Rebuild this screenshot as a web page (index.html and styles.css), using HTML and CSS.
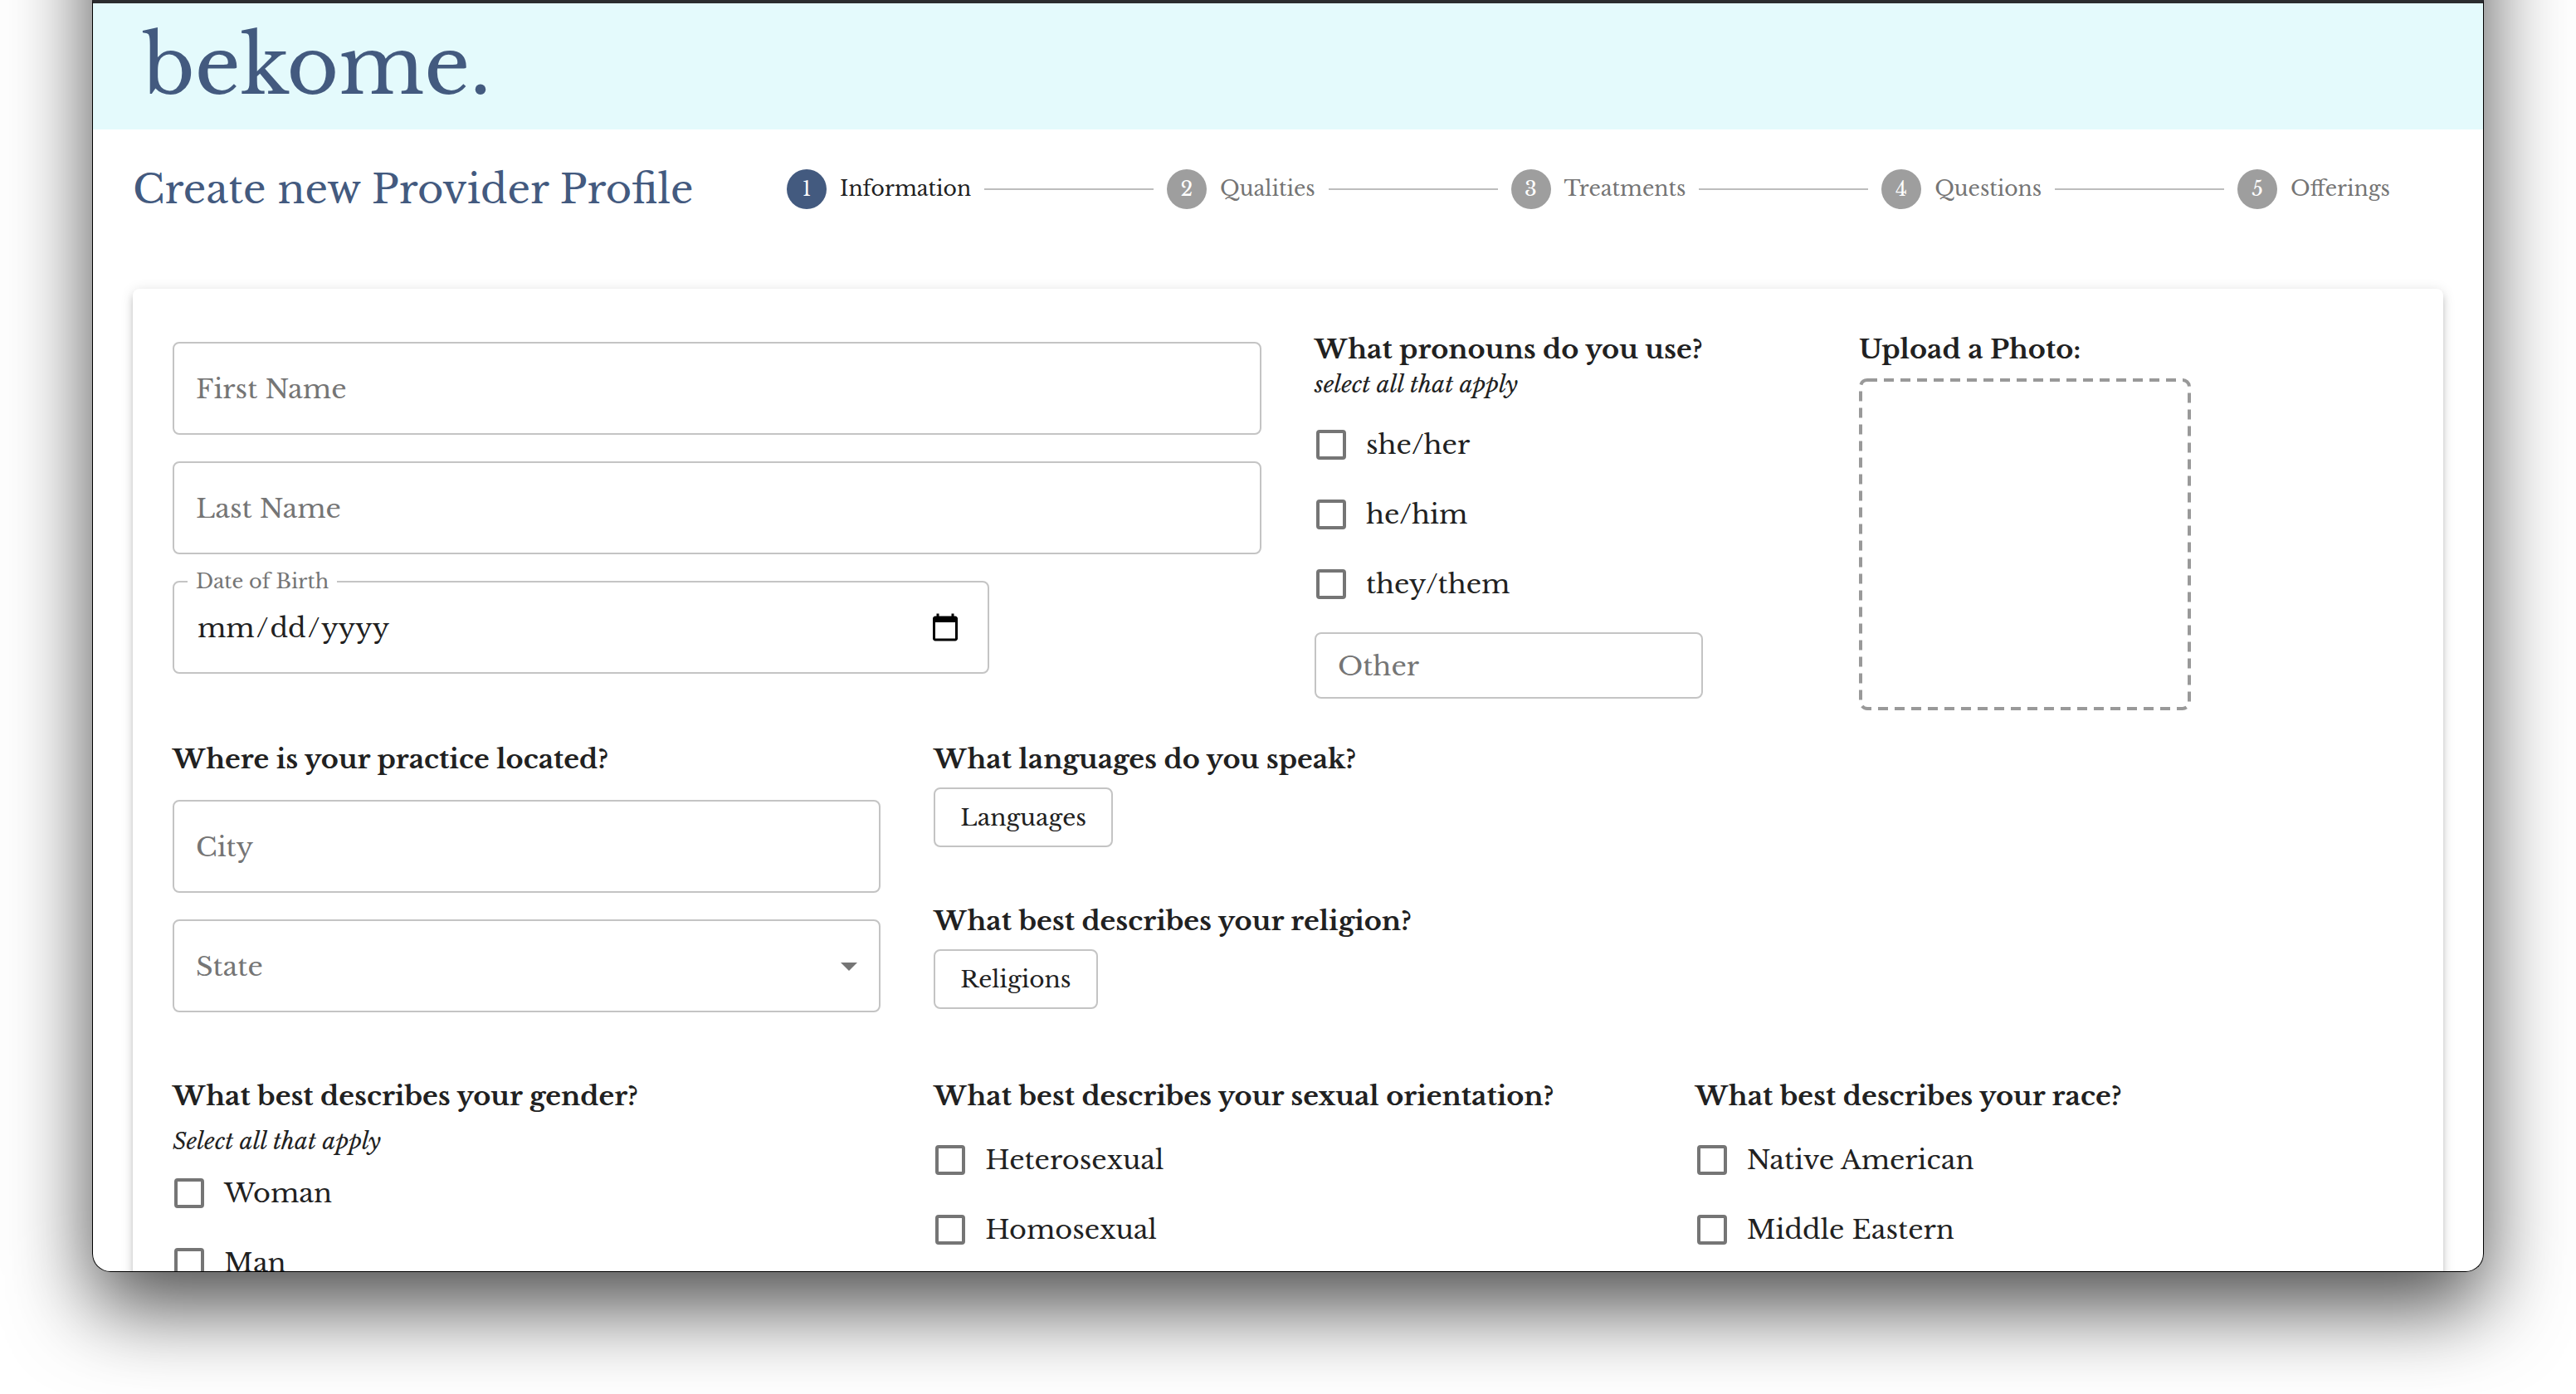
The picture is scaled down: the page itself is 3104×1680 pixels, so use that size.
FILE: index.html
```html
<!DOCTYPE html>
<html lang="en">
<head>
<meta charset="utf-8">
<title>bekome. – Create new Provider Profile</title>
<link rel="stylesheet" href="styles.css">
</head>
<body>
<div class="stage">
  <div class="window">
    <header class="brand"><span class="logo">bekome.</span></header>
    <main>
      <div class="intro">
        <h1 class="title">Create new Provider Profile</h1>
        <ol class="stepper">
          <li class="step step-active"><span class="dot">1</span>Information</li>
          <li class="line" role="presentation"></li>
          <li class="step"><span class="dot">2</span>Qualities</li>
          <li class="line" role="presentation"></li>
          <li class="step"><span class="dot">3</span>Treatments</li>
          <li class="line" role="presentation"></li>
          <li class="step"><span class="dot">4</span>Questions</li>
          <li class="line" role="presentation"></li>
          <li class="step"><span class="dot">5</span>Offerings</li>
        </ol>
      </div>

      <form class="card">
        <div class="row row-person">
          <div class="fields fields-name">
            <input class="field" type="text" placeholder="First Name" aria-label="First Name">
            <input class="field" type="text" placeholder="Last Name" aria-label="Last Name">
            <div class="date">
              <label class="date-label" for="dob">Date of Birth</label>
              <input class="field" type="date" id="dob">
            </div>
          </div>
          <section>
            <h2 class="question">What pronouns do you use?</h2>
            <p class="hint">select all that apply</p>
            <label class="option"><input class="check" type="checkbox">she/her</label>
            <label class="option"><input class="check" type="checkbox">he/him</label>
            <label class="option"><input class="check" type="checkbox">they/them</label>
            <input class="field field-small" type="text" placeholder="Other" aria-label="Other">
          </section>
          <section>
            <h2 class="question">Upload a Photo:</h2>
            <label class="photo" aria-label="Upload a Photo">
              <input class="file" type="file" accept="image/*">
              <svg class="photo-frame" viewBox="0 0 400 400" aria-hidden="true"><rect x="2" y="2" width="396" height="396" rx="8" fill="none" stroke="#999" stroke-width="4" stroke-dasharray="12 8"/></svg>
            </label>
          </section>
        </div>

        <div class="row row-place">
          <section>
            <h2 class="question">Where is your practice located?</h2>
            <div class="fields fields-place">
              <input class="field" type="text" placeholder="City" aria-label="City">
              <div class="select">
                <select class="field" aria-label="State"><option>State</option></select>
                <svg class="arrow" viewBox="0 0 20 10" aria-hidden="true"><path d="M0 0h20L10 10z" fill="#757575"/></svg>
              </div>
            </div>
          </section>
          <div class="pickers">
            <section class="picker">
              <h2 class="question">What languages do you speak?</h2>
              <button class="button" type="button">Languages</button>
            </section>
            <section class="picker">
              <h2 class="question">What best describes your religion?</h2>
              <button class="button" type="button">Religions</button>
            </section>
          </div>
        </div>

        <div class="row row-identity">
          <section>
            <h2 class="question">What best describes your gender?</h2>
            <p class="hint hint-spaced">Select all that apply</p>
            <label class="option"><input class="check" type="checkbox">Woman</label>
            <label class="option"><input class="check" type="checkbox">Man</label>
          </section>
          <section>
            <h2 class="question question-spaced">What best describes your sexual orientation?</h2>
            <label class="option"><input class="check" type="checkbox">Heterosexual</label>
            <label class="option"><input class="check" type="checkbox">Homosexual</label>
          </section>
          <section>
            <h2 class="question question-spaced">What best describes your race?</h2>
            <label class="option"><input class="check" type="checkbox">Native American</label>
            <label class="option"><input class="check" type="checkbox">Middle Eastern</label>
          </section>
        </div>
      </form>
    </main>
  </div>
</div>
</body>
</html>
```
FILE: styles.css
```css
* { box-sizing: border-box; }

body {
  margin: 0;
  min-height: 100vh;
  overflow: hidden;
  background: #fff;
  color: #212121;
  font-family: "Libre Baskerville", "Liberation Serif", serif;
  font-size: 32px;
}

h1, h2, p, ol { margin: 0; padding: 0; }

/* Browser window and its drop shadow */
.stage {
  position: relative;
  margin: 0 111px;
}

.stage::before {
  content: "";
  position: absolute;
  inset: -400px 0 0;
  border-radius: 22px;
  box-shadow: 0 42px 100px rgba(0, 0, 0, 0.7);
}

.window {
  position: relative;
  height: calc(100vh - 147px);
  overflow: hidden;
  background: #fff;
  border: 1px solid #000;
  border-top: 4px solid #2b2c2f;
  border-radius: 0 0 22px 22px;
}

.brand {
  padding: 0 60px;
  height: 152px;
  background: #e4fafc;
}

.logo {
  display: block;
  color: #435a7f;
  font-size: 96px;
  line-height: 152px;
}

.intro {
  display: grid;
  grid-template-columns: 788fr 1932fr;
  align-items: center;
  padding: 48px 112px 96px 48px;
}

.title {
  color: #435a7f;
  font-size: 48px;
  font-weight: 400;
  line-height: 48px;
  white-space: nowrap;
}

.stepper {
  display: flex;
  align-items: center;
  gap: 16px;
  list-style: none;
}

.step {
  display: flex;
  align-items: center;
  gap: 16px;
  color: #757575;
  font-size: 25px;
  line-height: 48px;
}

.step-active { color: #212121; }

.dot {
  width: 48px;
  height: 48px;
  border-radius: 50%;
  background: #9e9e9e;
  color: #fff;
  font-size: 24px;
  text-align: center;
}

.step-active .dot { background: #435a7f; }

.line {
  flex: 1;
  height: 2px;
  background: #bdbdbd;
}

.card {
  margin: 0 48px;
  padding: 48px;
  background: #fff;
  border-radius: 8px;
  box-shadow: 0 6px 6px -4px rgba(0, 0, 0, 0.2), 0 6px 8px rgba(0, 0, 0, 0.14), 0 2px 16px rgba(0, 0, 0, 0.12);
}

.row {
  display: grid;
  gap: 64px;
}

.row-person { grid-template-columns: 1312fr 592fr 656fr; }

.row-place {
  grid-template-columns: repeat(3, 1fr);
  margin-top: 34px;
}

.row-identity {
  grid-template-columns: repeat(3, 1fr);
  margin-top: 76px;
}

.question {
  font-size: 32px;
  font-weight: 700;
  line-height: 50px;
  white-space: nowrap;
}

.question-spaced { margin-bottom: 10px; }

.hint {
  margin-bottom: 12px;
  font-size: 28px;
  font-style: italic;
  line-height: 36px;
}

.hint-spaced { margin: 12px 0 2px; }

.fields {
  display: flex;
  flex-direction: column;
  gap: 32px;
}

.fields-name { padding-top: 16px; }
.fields-place { padding-top: 24px; }

.field {
  display: block;
  width: 100%;
  height: 112px;
  padding: 2px 26px 0;
  border: 2px solid #c4c4c4;
  border-radius: 8px;
  background: transparent;
  color: #212121;
  font: inherit;
}

.field::placeholder { color: #757575; opacity: 1; }

.field-small {
  width: 79%;
  height: 80px;
  margin-top: 16px;
}

.date {
  position: relative;
  width: 75%;
}

.date-label {
  position: absolute;
  top: -15px;
  left: 18px;
  padding: 0 10px;
  background: #fff;
  color: #757575;
  font-size: 24px;
  line-height: 32px;
}

.field::-webkit-datetime-edit-month-field,
.field::-webkit-datetime-edit-day-field,
.field::-webkit-datetime-edit-year-field {
  padding: 0 2px;
}

.field::-webkit-calendar-picker-indicator {
  width: 38px;
  height: 38px;
  margin-right: 6px;
  padding: 0;
}

.select { position: relative; }

.select .field {
  appearance: none;
  color: #757575;
}

.arrow {
  position: absolute;
  top: 52px;
  right: 28px;
  width: 20px;
  height: 10px;
  pointer-events: none;
}

.option {
  display: flex;
  align-items: center;
  gap: 24px;
  height: 84px;
  padding-left: 2px;
}

.check {
  appearance: none;
  width: 36px;
  height: 36px;
  margin: 0;
  border: 4px solid #757575;
  border-radius: 4px;
}

.photo {
  display: block;
  width: 400px;
  margin-top: 10px;
}

.photo-frame {
  display: block;
  width: 100%;
}

.file {
  position: absolute;
  width: 1px;
  height: 1px;
  opacity: 0;
}

.pickers {
  display: flex;
  flex-direction: column;
  gap: 64px;
}

.picker {
  display: flex;
  flex-direction: column;
  align-items: flex-start;
  gap: 9px;
}

.button {
  height: 72px;
  padding: 0 30px;
  border: 2px solid #c4c4c4;
  border-radius: 8px;
  background: transparent;
  color: #212121;
  font: inherit;
  font-size: 28px;
}
```
